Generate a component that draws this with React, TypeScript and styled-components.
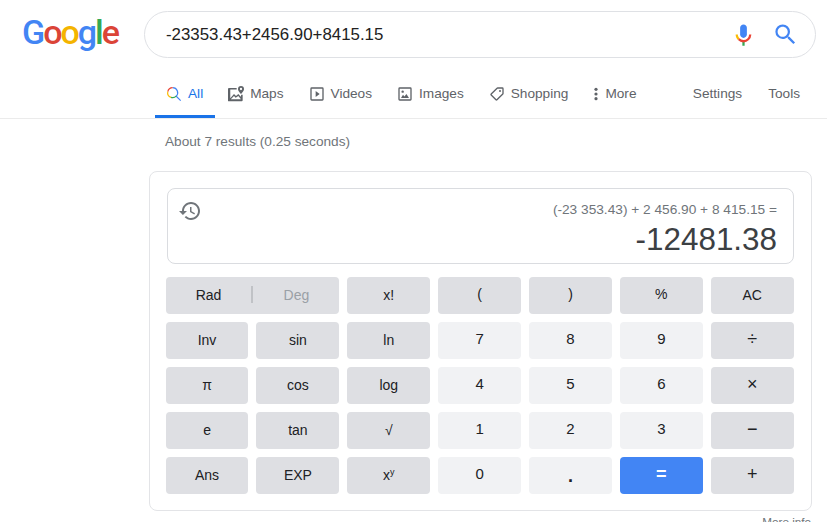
import React from 'react';
import styled, { createGlobalStyle } from 'styled-components';

const GlobalStyle = createGlobalStyle`
  html, body {
    margin: 0;
    padding: 0;
    height: 100%;
    overflow: hidden;
    background: #fff;
    font-family: "Liberation Sans", Arial, sans-serif;
  }
`;

const Page = styled.div`
  width: 827px;
  height: 522px;
  overflow: hidden;
`;

const TopBar = styled.div`
  display: flex;
  align-items: flex-start;
  padding: 11px 11px 0 22px;
`;

const Logo = styled.div`
  width: 122px;
  height: 47px;
  font-family: Roboto, sans-serif;
  font-weight: 500;
  font-size: 34px;
  line-height: 43px;
  letter-spacing: -2px;
  flex-shrink: 0;
`;

const LogoLetter = styled.span<{ $color: string }>`
  color: ${(p) => p.$color};
`;

const SearchBox = styled.div`
  flex: 1;
  height: 47px;
  box-sizing: border-box;
  border: 1px solid #dfe1e5;
  border-radius: 24px;
  display: flex;
  align-items: center;
  padding: 0 16px 0 21px;
`;

const SearchText = styled.div`
  flex: 1;
  font-size: 16.85px;
  color: #222;
`;

const MicIcon = styled.svg`
  width: 27px;
  height: 27px;
  margin-right: 15px;
`;

const SearchIcon = styled.svg`
  width: 27px;
  height: 27px;
`;

const Tabs = styled.div`
  display: flex;
  height: 61px;
  box-sizing: border-box;
  padding: 0 15px 0 155px;
  border-bottom: 1px solid #ebebeb;
`;

const Tab = styled.div<{ $active?: boolean; $plain?: boolean }>`
  display: flex;
  align-items: center;
  gap: 6px;
  height: 60px;
  box-sizing: border-box;
  padding: 14px 12px 0 ${(p) => (p.$plain ? 12 : 11)}px;
  margin-right: 2px;
  font-size: 13.65px;
  color: ${(p) => (p.$active ? '#1a73e8' : '#5f6368')};
  border-bottom: 3px solid ${(p) => (p.$active ? '#1a73e8' : 'transparent')};

  &:last-child {
    margin-right: 0;
  }
`;

const TabIcon = styled.svg<{ $narrow?: boolean }>`
  width: ${(p) => (p.$narrow ? 6 : 16)}px;
  height: 16px;
  fill: #5f6368;
`;

const TabSpacer = styled.div`
  flex: 1;
`;

const Stats = styled.div`
  padding: 14px 0 0 165px;
  height: 38px;
  box-sizing: border-box;
  font-size: 13.65px;
  line-height: 17px;
  color: #70757a;
`;

const CalcCard = styled.div`
  margin: 14px 15px 0 149px;
  box-sizing: border-box;
  height: 340px;
  border: 1px solid #e3e4e7;
  border-radius: 8px;
  padding: 16px 17px 0 16px;
`;

const Display = styled.div`
  height: 76px;
  box-sizing: border-box;
  margin-left: 1px;
  border: 1px solid #dadce0;
  border-radius: 8px;
  display: flex;
  justify-content: space-between;
  padding: 10px 16px 0 10px;
`;

const HistoryIcon = styled.svg`
  width: 24px;
  height: 24px;
  fill: #70757a;
  flex-shrink: 0;
`;

const DisplayRight = styled.div`
  text-align: right;
`;

const Expression = styled.div`
  font-size: 13.7px;
  line-height: 15px;
  color: #70757a;
  margin-top: 3px;
`;

const Result = styled.div`
  font-size: 31.4px;
  line-height: 34px;
  color: #3c4043;
  margin-top: 6px;
`;

const Keys = styled.div`
  display: grid;
  grid-template-columns: repeat(7, 1fr);
  grid-auto-rows: 37px;
  gap: 8px;
  width: 628px;
  margin: 13px 0 0 -0.4px;
`;

type KeyKind = 'fn' | 'paren' | 'num' | 'dot' | 'op' | 'eq';

const keyPaddingBottom: Record<KeyKind, number> = { fn: 2, paren: 4, num: 4, dot: 0, op: 2, eq: 2 };

const Key = styled.div<{ $kind?: KeyKind; $span?: number }>`
  grid-column: span ${(p) => p.$span ?? 1};
  border-radius: 4px;
  display: flex;
  align-items: center;
  justify-content: center;
  box-sizing: border-box;
  font-size: ${(p) => (p.$kind === 'op' || p.$kind === 'eq' || p.$kind === 'dot' ? 18 : p.$kind === 'num' ? 15 : 14)}px;
  font-weight: ${(p) => (p.$kind === 'eq' || p.$kind === 'dot' ? 'bold' : 'normal')};
  padding-bottom: ${(p) => keyPaddingBottom[p.$kind ?? 'fn']}px;
  padding-top: ${(p) => (p.$kind === 'dot' ? 1 : 0)}px;
  color: ${(p) => (p.$kind === 'eq' ? '#fff' : '#202124')};
  background: ${(p) =>
    p.$kind === 'eq' ? '#4285f4' : p.$kind === 'num' || p.$kind === 'dot' ? '#f1f2f4' : '#dedfe3'};
`;

const DegPart = styled.span<{ $muted?: boolean }>`
  flex: 1;
  text-align: center;
  color: ${(p) => (p.$muted ? '#9aa0a6' : '#202124')};
`;

const DegDivider = styled.span`
  width: 2px;
  height: 17px;
  background: #c0c2c6;
`;

const Sup = styled.sup`
  font-size: 9px;
  line-height: 0;
  vertical-align: 5px;
`;

const MoreInfo = styled.div`
  text-align: right;
  padding: 4px 16px 0 0;
  font-size: 11.7px;
  color: #70757a;
`;

const rows: { label: string; kind: KeyKind }[][] = [
  [
    { label: '(', kind: 'paren' },
    { label: ')', kind: 'paren' },
    { label: '%', kind: 'paren' },
    { label: 'AC', kind: 'fn' },
  ],
  [
    { label: 'Inv', kind: 'fn' },
    { label: 'sin', kind: 'fn' },
    { label: 'ln', kind: 'fn' },
    { label: '7', kind: 'num' },
    { label: '8', kind: 'num' },
    { label: '9', kind: 'num' },
    { label: '÷', kind: 'op' },
  ],
  [
    { label: 'π', kind: 'fn' },
    { label: 'cos', kind: 'fn' },
    { label: 'log', kind: 'fn' },
    { label: '4', kind: 'num' },
    { label: '5', kind: 'num' },
    { label: '6', kind: 'num' },
    { label: '×', kind: 'op' },
  ],
  [
    { label: 'e', kind: 'fn' },
    { label: 'tan', kind: 'fn' },
    { label: '√', kind: 'fn' },
    { label: '1', kind: 'num' },
    { label: '2', kind: 'num' },
    { label: '3', kind: 'num' },
    { label: '−', kind: 'op' },
  ],
];

export default function App() {
  return (
    <Page>
      <GlobalStyle />
      <TopBar>
        <Logo>
          <LogoLetter $color="#4285f4">G</LogoLetter>
          <LogoLetter $color="#db4437">o</LogoLetter>
          <LogoLetter $color="#f4b400">o</LogoLetter>
          <LogoLetter $color="#4285f4">g</LogoLetter>
          <LogoLetter $color="#34a853">l</LogoLetter>
          <LogoLetter $color="#db4437">e</LogoLetter>
        </Logo>
        <SearchBox>
          <SearchText>-23353.43+2456.90+8415.15</SearchText>
          <MicIcon viewBox="0 0 24 24">
            <path fill="#4285f4" d="M12 15c1.66 0 3-1.31 3-2.97V5.97C15 4.31 13.66 3 12 3S9 4.31 9 5.97v6.06C9 13.69 10.34 15 12 15z" />
            <path fill="#34a853" d="M11 18h2v4h-2z" />
            <path fill="#fbbc05" d="M7.05 16.87c-1.27-1.33-2.05-2.83-2.05-4.87h2c0 1.45.56 2.42 1.47 3.38z" />
            <path fill="#ea4335" d="M12 16.93a4.97 5.25 0 0 1-3.54-1.55l-1.41 1.49A6.98 7.35 0 0 0 12 19a6.98 7.35 0 0 0 7-7l-2-.02a4.97 5.25 0 0 1-5 4.95z" />
          </MicIcon>
          <SearchIcon viewBox="0 0 24 24">
            <path fill="#4285f4" d="M15.5 14h-.79l-.28-.27A6.471 6.471 0 0 0 16 9.5 6.5 6.5 0 1 0 9.5 16c1.61 0 3.09-.59 4.23-1.57l.27.28v.79l5 4.99L20.49 19l-4.99-5zm-6 0C7.01 14 5 11.99 5 9.5S7.01 5 9.5 5 14 7.01 14 9.5 11.99 14 9.5 14z" />
          </SearchIcon>
        </SearchBox>
      </TopBar>
      <Tabs>
        <Tab $active>
          <TabIcon viewBox="0 0 24 24">
            <g fill="none" strokeWidth="1.8">
              <path stroke="#4285f4" d="M10 2.500a7.500 7.500 0 0 1 5.300 12.800L22 22" />
              <path stroke="#ea4335" d="M10 2.500a7.500 7.500 0 0 0-7.300 6" />
              <path stroke="#fbbc05" d="M2.700 8.500a7.500 7.500 0 0 0 4.800 8.600" />
              <path stroke="#34a853" d="M7.500 17.100a7.500 7.500 0 0 0 7.800-1.800" />
            </g>
          </TabIcon>
          All
        </Tab>
        <Tab>
          <TabIcon viewBox="0 0 24 24">
            <path d="M19.500 0a4.500 4.500 0 0 0-4.500 4.500C15 8 19.500 12 19.500 12S24 8 24 4.500A4.500 4.500 0 0 0 19.500 0zm0 6.200a1.700 1.700 0 1 1 0-3.400 1.700 1.700 0 0 1 0 3.400z" />
            <path d="M1.500 3H13v2.200H3.400v13.300L9 12l3 3 3.500-3 3.700 4 .6-3h2.200v8.500a1.500 1.500 0 0 1-1.500 1.500H1.500A1.500 1.500 0 0 1 0 21V4.500A1.500 1.500 0 0 1 1.500 3zm10 14.500l-2.500-2.600-4.800 5.100h15v-.6L15.500 15z" />
          </TabIcon>
          Maps
        </Tab>
        <Tab>
          <TabIcon viewBox="0 0 24 24">
            <path d="M10 16.500l6-4.500-6-4.500zM20 2H4a2 2 0 0 0-2 2v16a2 2 0 0 0 2 2h16a2 2 0 0 0 2-2V4a2 2 0 0 0-2-2zm0 18H4V4h16z" />
          </TabIcon>
          Videos
        </Tab>
        <Tab>
          <TabIcon viewBox="0 0 24 24">
            <path d="M20 4v16H4V4h16m0-2H4a2 2 0 0 0-2 2v16a2 2 0 0 0 2 2h16a2 2 0 0 0 2-2V4a2 2 0 0 0-2-2zm-5.860 9.860l-3 3.870L9 13.140 6 18h12l-3.860-6.140z" />
            <circle cx="8.500" cy="8.500" r="1.800" />
          </TabIcon>
          Images
        </Tab>
        <Tab>
          <TabIcon viewBox="0 0 24 24">
            <g transform="translate(24 0) scale(-1 1)">
              <path d="M21.410 11.410l-8.830-8.830A2 2 0 0 0 11.170 2H4a2 2 0 0 0-2 2v7.170c0 .53.210 1.040.59 1.410l8.830 8.830a2 2 0 0 0 2.830 0l7.170-7.170a2 2 0 0 0-.01-2.830zM12.830 20L4 11.170V4h7.170L20 12.830 12.830 20z" />
              <circle cx="7.500" cy="7.500" r="1.500" />
            </g>
          </TabIcon>
          Shopping
        </Tab>
        <Tab>
          <TabIcon $narrow viewBox="7.500 0 9 24">
            <circle cx="12" cy="5" r="2.400" />
            <circle cx="12" cy="12" r="2.400" />
            <circle cx="12" cy="19" r="2.400" />
          </TabIcon>
          More
        </Tab>
        <TabSpacer />
        <Tab $plain>Settings</Tab>
        <Tab $plain>Tools</Tab>
      </Tabs>
      <Stats>About 7 results (0.25 seconds)</Stats>
      <CalcCard>
        <Display>
          <HistoryIcon viewBox="0 0 24 24">
            <path d="M13 3c-4.970 0-9 4.030-9 9H1l3.890 3.890.070.140L9 12H6c0-3.870 3.130-7 7-7s7 3.130 7 7-3.130 7-7 7c-1.930 0-3.680-.790-4.940-2.060l-1.420 1.420C8.270 19.990 10.510 21 13 21c4.970 0 9-4.030 9-9s-4.030-9-9-9zm-1 5v5l4.280 2.540.720-1.210-3.500-2.080V8H12z" />
          </HistoryIcon>
          <DisplayRight>
            <Expression>(-23 353.43) + 2 456.90 + 8 415.15 =</Expression>
            <Result>-12481.38</Result>
          </DisplayRight>
        </Display>
        <Keys>
          <Key $span={2}>
            <DegPart>Rad</DegPart>
            <DegDivider />
            <DegPart $muted>Deg</DegPart>
          </Key>
          <Key>x!</Key>
          {rows.map((row) =>
            row.map((k) => (
              <Key key={k.label} $kind={k.kind}>
                {k.label}
              </Key>
            ))
          )}
          <Key>Ans</Key>
          <Key>EXP</Key>
          <Key>
            <span>
              x<Sup>y</Sup>
            </span>
          </Key>
          <Key $kind="num">0</Key>
          <Key $kind="dot">.</Key>
          <Key $kind="eq">=</Key>
          <Key $kind="op">+</Key>
        </Keys>
      </CalcCard>
      <MoreInfo>More info</MoreInfo>
    </Page>
  );
}
